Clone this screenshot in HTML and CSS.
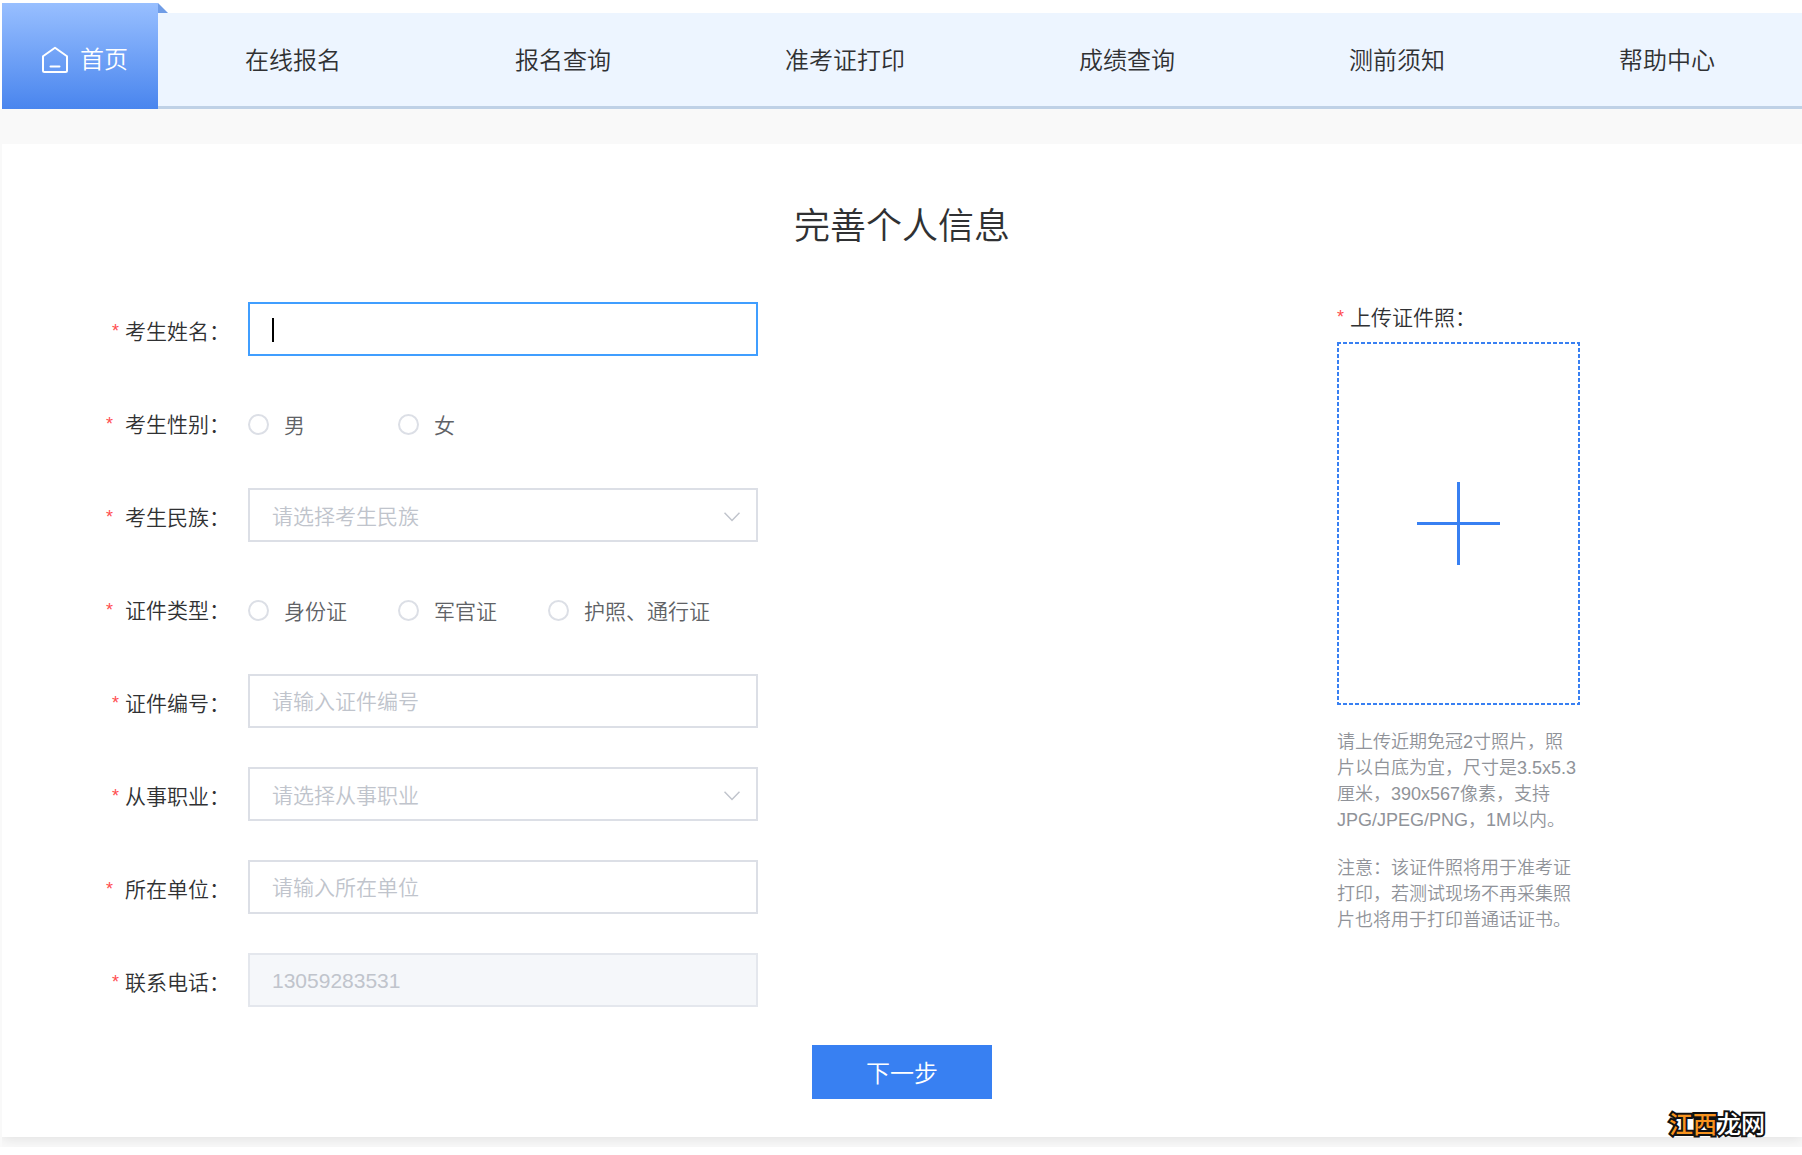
FILE: index.html
```html
<!DOCTYPE html>
<html lang="zh-CN">
<head>
<meta charset="utf-8">
<meta name="viewport" content="width=device-width, initial-scale=1">
<title>完善个人信息</title>
<link rel="stylesheet" href="styles.css">
</head>
<body>
<header class="header">
  <nav class="nav">
    <a class="nav-home" href="#">
      <svg class="home-icon" viewBox="0 0 28 28" aria-hidden="true"><path d="M2 10.200 14 1.800l12 8.400v14.300q0 1.500-1.500 1.500h-21Q2 26 2 24.500z"/><path d="M9.500 20.500h9"/></svg>
      <span>首页</span>
    </a>
    <div class="nav-list">
      <a class="nav-link" href="#">在线报名</a>
      <a class="nav-link" href="#">报名查询</a>
      <a class="nav-link" href="#">准考证打印</a>
      <a class="nav-link" href="#">成绩查询</a>
      <a class="nav-link" href="#">测前须知</a>
      <a class="nav-link" href="#">帮助中心</a>
    </div>
  </nav>
</header>
<main class="page">
  <form class="card">
    <h1 class="title">完善个人信息</h1>
    <div class="columns">
      <div class="fields">
        <div class="row">
          <label class="label" for="name"><span class="star">*</span>考生姓名：</label>
          <div class="control">
            <input class="input input-active" id="name" type="text">
            <span class="caret"></span>
          </div>
        </div>
        <div class="row" role="radiogroup" aria-labelledby="sex-label">
          <span class="label" id="sex-label"><span class="star star-wide">*</span>考生性别：</span>
          <div class="control radios">
            <label class="radio"><input class="radio-input" type="radio" name="sex">男</label>
            <label class="radio"><input class="radio-input" type="radio" name="sex">女</label>
          </div>
        </div>
        <div class="row">
          <label class="label" for="nation"><span class="star star-wide">*</span>考生民族：</label>
          <div class="control">
            <select class="input select" id="nation"><option>请选择考生民族</option></select>
            <svg class="chevron" viewBox="0 0 16 10" aria-hidden="true"><path d="M.5.8 8 8.500 15.500.8"/></svg>
          </div>
        </div>
        <div class="row" role="radiogroup" aria-labelledby="type-label">
          <span class="label" id="type-label"><span class="star star-wide">*</span>证件类型：</span>
          <div class="control radios">
            <label class="radio"><input class="radio-input" type="radio" name="type">身份证</label>
            <label class="radio"><input class="radio-input" type="radio" name="type">军官证</label>
            <label class="radio"><input class="radio-input" type="radio" name="type">护照、通行证</label>
          </div>
        </div>
        <div class="row">
          <label class="label" for="number"><span class="star">*</span>证件编号：</label>
          <div class="control"><input class="input" id="number" type="text" placeholder="请输入证件编号"></div>
        </div>
        <div class="row">
          <label class="label" for="job"><span class="star">*</span>从事职业：</label>
          <div class="control">
            <select class="input select" id="job"><option>请选择从事职业</option></select>
            <svg class="chevron" viewBox="0 0 16 10" aria-hidden="true"><path d="M.5.8 8 8.500 15.500.8"/></svg>
          </div>
        </div>
        <div class="row">
          <label class="label" for="company"><span class="star star-wide">*</span>所在单位：</label>
          <div class="control"><input class="input" id="company" type="text" placeholder="请输入所在单位"></div>
        </div>
        <div class="row">
          <label class="label" for="phone"><span class="star">*</span>联系电话：</label>
          <div class="control"><input class="input" id="phone" type="text" value="13059283531" disabled></div>
        </div>
      </div>
      <div class="upload">
        <div class="upload-label" id="photo-label"><span class="star">*</span>上传证件照：</div>
        <button class="upload-box" type="button" aria-labelledby="photo-label">
          <svg class="plus" viewBox="0 0 83 83" aria-hidden="true"><path d="M0 41.500h83M41.500 0v83"/></svg>
        </button>
        <p class="hint">请上传近期免冠2寸照片，照片以白底为宜，尺寸是3.5x5.3厘米，390x567像素，支持JPG/JPEG/PNG，1M以内。</p>
        <p class="hint">注意：该证件照将用于准考证打印，若测试现场不再采集照片也将用于打印普通话证书。</p>
      </div>
    </div>
    <button class="submit" type="button">下一步</button>
    <div class="watermark"><span class="watermark-accent">江西</span>龙网</div>
  </form>
</main>
</body>
</html>
```
FILE: styles.css
```css
* {
  box-sizing: border-box;
}

body {
  margin: 0;
  background: #fff;
  color: #303133;
  font-family: "Liberation Sans", "Noto Sans CJK SC", sans-serif;
  font-weight: 350;
  font-size: 21px;
}

button,
input,
select {
  margin: 0;
  font: inherit;
}

.header {
  padding: 3px 0 0 2px;
}

.nav {
  display: flex;
  align-items: flex-end;
  font-size: 24px;
}

.nav-home {
  position: relative;
  display: flex;
  align-items: center;
  gap: 11px;
  width: 156px;
  height: 106px;
  padding: 8px 0 0 39px;
  background: linear-gradient(#98bfff, #4985ee);
  color: #fff;
  line-height: 34px;
  text-decoration: none;
}

.nav-home::after {
  content: "";
  position: absolute;
  top: 0;
  left: 100%;
  width: 10px;
  height: 10px;
  background: #6f9ce6;
  clip-path: polygon(0 0, 100% 100%, 0 100%);
}

.home-icon {
  width: 28px;
  height: 28px;
  fill: none;
  stroke: #fff;
  stroke-width: 2;
  stroke-linecap: round;
  stroke-linejoin: round;
}

.nav-list {
  display: flex;
  flex: 1;
  align-items: center;
  justify-content: space-around;
  height: 96px;
  padding-top: 2px;
  border-bottom: 3px solid #bfd1e6;
  background: #edf5ff;
}

.nav-link {
  color: #303133;
  line-height: 36px;
  text-decoration: none;
}

.page {
  padding: 35px 0 10px 2px;
  background: #f9f9f9;
}

.card {
  position: relative;
  padding: 56px 0 38px;
  background: #fff;
  box-shadow: 0 2px 12px rgba(0, 0, 0, 0.1);
  clip-path: inset(0 0 -10px 0);
}

.title {
  margin: 0 0 48px;
  font-size: 36px;
  font-weight: 350;
  line-height: 54px;
  text-align: center;
}

.columns {
  display: flex;
  justify-content: space-between;
  padding: 0 222px 0 98px;
}

.fields {
  display: flex;
  flex-direction: column;
  gap: 39px;
}

.row {
  display: flex;
  height: 54px;
}

.label {
  width: 148px;
  padding-right: 18px;
  line-height: 60px;
  text-align: right;
  white-space: nowrap;
}

.star {
  margin-right: 6px;
  color: #ff4d4f;
  font-size: 18px;
  line-height: 18px;
  vertical-align: 2px;
}

.star-wide {
  margin-right: 12px;
}

.control {
  position: relative;
  width: 510px;
}

.input {
  display: block;
  width: 100%;
  height: 54px;
  padding: 2px 22px 0;
  border: 2px solid #dcdfe6;
  border-radius: 0;
  outline: none;
  background: #fff;
  color: #606266;
}

.input::placeholder {
  color: #c0c4cc;
  opacity: 1;
}

.input:focus,
.input-active {
  border-color: #409eff;
}

.input:disabled {
  border-color: #e4e7ed;
  background: #f5f7fa;
  color: #c0c4cc;
}

.select {
  appearance: none;
  color: #c0c4cc;
}

.caret {
  position: absolute;
  top: 16px;
  left: 24px;
  width: 2px;
  height: 24px;
  background: #000;
}

.chevron {
  position: absolute;
  top: 24px;
  right: 18px;
  width: 16px;
  height: 10px;
  fill: none;
  stroke: #c0c4cc;
  stroke-width: 1.5;
  pointer-events: none;
}

.radios {
  display: flex;
}

.radio {
  display: flex;
  align-items: center;
  gap: 15px;
  min-width: 150px;
  height: 58px;
  color: #606266;
  white-space: nowrap;
}

.radio-input {
  width: 21px;
  height: 21px;
  border: 2px solid #dcdfe6;
  border-radius: 50%;
  appearance: none;
  background: #fff;
}

.radio-input:checked {
  border: 6px solid #409eff;
}

.upload {
  width: 243px;
}

.upload-label {
  height: 40px;
  line-height: 32px;
}

.upload-box {
  display: flex;
  align-items: center;
  justify-content: center;
  width: 100%;
  height: 363px;
  margin-bottom: 24px;
  padding: 0;
  border: 0;
  background:
    repeating-linear-gradient(90deg, #3880f2 0 4px, transparent 4px 6px) top / 100% 2px no-repeat,
    repeating-linear-gradient(90deg, #3880f2 0 4px, transparent 4px 6px) bottom / 100% 2px no-repeat,
    repeating-linear-gradient(#3880f2 0 4px, transparent 4px 6px) left / 2px 100% no-repeat,
    repeating-linear-gradient(#3880f2 0 4px, transparent 4px 6px) right / 2px 100% no-repeat;
}

.plus {
  width: 83px;
  height: 83px;
  fill: none;
  stroke: #3880f2;
  stroke-width: 3;
}

.hint {
  margin: 0 0 22px;
  color: #909399;
  font-size: 18px;
  line-height: 26px;
}

.submit {
  display: block;
  width: 180px;
  height: 54px;
  margin: 38px auto 0;
  padding: 0 0 2px;
  border: 0;
  background: #3880f2;
  color: #fff;
  font-size: 24px;
}

.watermark {
  position: absolute;
  right: 37px;
  bottom: -6px;
  color: #fff;
  font-size: 24px;
  font-weight: 500;
  line-height: 36px;
  -webkit-text-stroke: 4px #111;
  paint-order: stroke fill;
}

.watermark-accent {
  color: #f7931e;
}
```
